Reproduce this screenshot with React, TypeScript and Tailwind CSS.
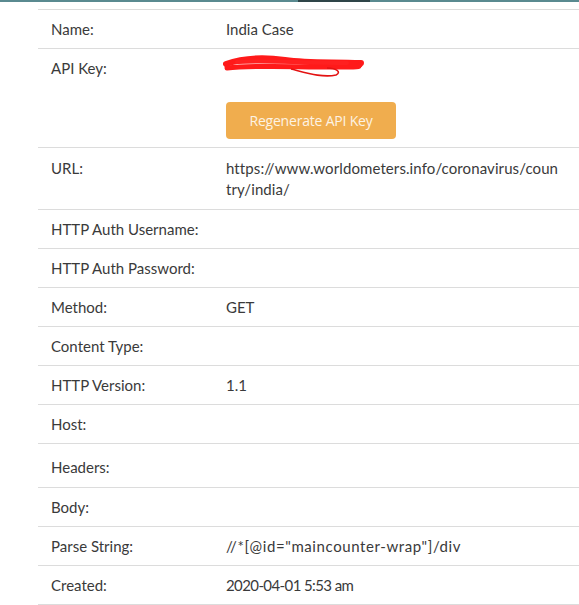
import React from 'react';

type Row = { label: string; value?: React.ReactNode; pad?: string };

const ApiKey: React.FC = () => (
    <div className="flex flex-col">
        <svg width="142" height="24" viewBox="0 0 142 24" className="-ml-[3px] -mt-[3px]">
            <path d="M3 9 C20 3, 40 2, 62 5 S100 7, 138 8" stroke="#ff1a1a" strokeWidth="6" fill="none" strokeLinecap="round" />
            <path d="M4 13 C30 10, 70 12, 110 12 S130 11, 137 10" stroke="#ff1a1a" strokeWidth="5" fill="none" strokeLinecap="round" />
            <path d="M14 7 C40 5, 80 8, 124 8" stroke="#ff2020" strokeWidth="4" fill="none" strokeLinecap="round" />
            <path d="M68 14 C84 18, 100 23, 113 20 C119 17, 113 13, 104 13" stroke="#e31212" strokeWidth="1.6" fill="none" />
        </svg>
        <button className="mt-[23px] h-[37px] w-[170px] rounded-[4px] bg-[#f0ad4e] text-[14px] text-[#fdf3e4] font-['Open_Sans',sans-serif] tracking-[-0.2px]">
            Regenerate API Key
        </button>
    </div>
);

const rows: Row[] = [
    { label: 'Name:', value: 'India Case' },
    { label: 'API Key:', value: <ApiKey /> },
    {
        label: 'URL:',
        pad: 'pt-[10px] pb-[9px]',
        value: (
            <div className="w-[334px] break-all tracking-[0.1px]">
                https://www.worldometers.info/coronavirus/country/india/
            </div>
        ),
    },
    { label: 'HTTP Auth Username:' },
    { label: 'HTTP Auth Password:' },
    { label: 'Method:', value: 'GET' },
    { label: 'Content Type:' },
    { label: 'HTTP Version:', value: '1.1' },
    { label: 'Host:' },
    { label: 'Headers:', pad: 'pt-[13px] pb-[9px]' },
    { label: 'Body:' },
    { label: 'Parse String:', value: <span className="tracking-[0.6px]">//*[@id="maincounter-wrap"]/div</span> },
    { label: 'Created:', value: <span className="tracking-[-0.6px]">2020-04-01 5:53 am</span> },
];

export default function App() {
    return (
        <div className="w-[579px] h-[605px] overflow-hidden bg-white font-['Lato',sans-serif] text-[15px] leading-[21px] text-[#3a3a3a]">
            <div className="flex h-[2px] bg-[#5a8a90]">
                <div className="ml-[298px] w-[72px] bg-[#2f4548]"></div>
            </div>
            <div className="ml-[38px] mt-[7px] border-t border-[#dcdcdc]">
                {rows.map((r) => (
                    <div key={r.label} className={`flex border-b border-[#dcdcdc] ${r.pad ?? 'pt-[9px] pb-[8px]'}`}>
                        <div className="w-[188px] shrink-0 pl-[13px]">{r.label}</div>
                        <div className="flex-1 pr-[12px]">{r.value}</div>
                    </div>
                ))}
            </div>
        </div>
    );
}
